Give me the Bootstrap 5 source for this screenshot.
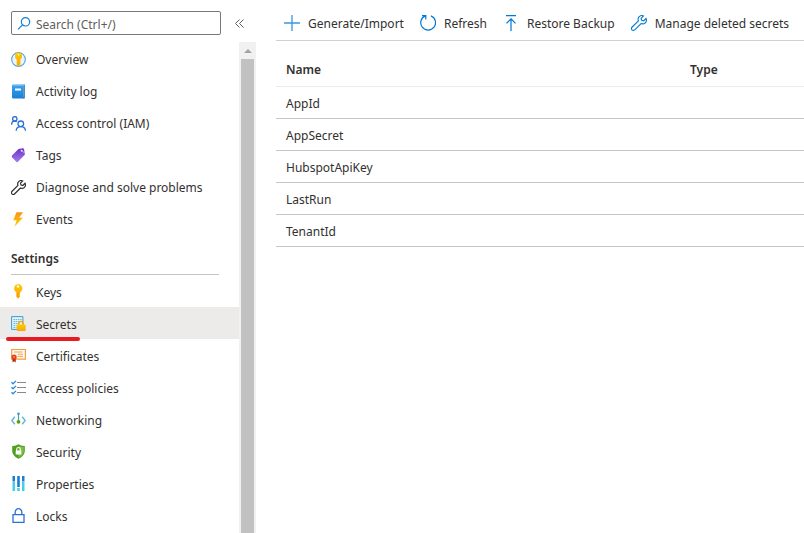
<!DOCTYPE html>
<html lang="en">
<head>
<meta charset="utf-8">
<meta name="viewport" content="width=device-width, initial-scale=1">
<title>Key vault - Secrets</title>
<link href="https://cdn.jsdelivr.net/npm/bootstrap@5.3.0/dist/css/bootstrap.min.css" rel="stylesheet">
<style>
  body { font-family: "Noto Sans", "Open Sans", sans-serif; font-size: 12px; line-height: 20px; color: #323130; background: #fff; }
  svg { display: block; flex: none; }
  .blade-menu { width: 256px; }
  .menu-top { height: 42px; padding: 11px 11px 7px; gap: 13px; }
  .search-box { width: 210px; height: 24px; border: 1px solid #7a7876; border-radius: 2px; padding: 0 5px; gap: 4px; }
  .search-box input { height: 22px; padding: 2px 0 0; font-size: 12px; line-height: 20px; outline: 0; color: #323130; }
  .search-box input::placeholder { color: #605e5c; opacity: 1; }
  .menu-links { padding-top: 1px; }
  .menu-item { height: 32px; padding: 2px 11px 0; gap: 10px; color: #323130; text-decoration: none; position: relative; }
  .menu-item svg { margin-bottom: 2px; }
  .menu-group .menu-item { padding-top: 3px; }
  .menu-item:hover { background: #f3f2f1; color: #323130; }
  .menu-item.current { background: #edebe9; }
  .menu-item.current::after { content: ""; position: absolute; left: 6px; bottom: -2px; width: 74px; height: 4px; border-radius: 2px; background: #e81b23; }
  .menu-heading { height: 40px; margin: 0 20px 0 11px; padding-top: 14px; font-size: 12px; line-height: 20px; font-weight: 600; border-bottom: 1px solid #c8c6c4; }
  .scroll-track { width: 17px; background: #f1f1f1; }
  .scroll-track button { height: 17px; }
  .scroll-thumb { width: 13px; background: #c1c1c1; }
  .blade-main { margin-left: 20px; }
  .command-bar { height: 41px; padding: 5px 8px 0; gap: 16px; border-bottom: 1px solid #d2d0ce; }
  .command-bar button { gap: 8px; color: #323130; padding: 2px 0 0; }
  .command-bar svg { margin-bottom: 2px; }
  .secret-table { font-size: 12px; line-height: 20px; color: #323130; table-layout: fixed; }
  .secret-table th, .secret-table td { height: 32px; padding: 7px 10px 4px; border-bottom: 1px solid #c8c6c4; color: #323130; }
  .secret-table thead th { height: 45px; padding: 18px 10px 6px; font-weight: 600; border-color: #edebe9; }
  .secret-table .type-col { width: 124px; }
</style>
<script src="https://cdn.jsdelivr.net/npm/bootstrap@5.3.0/dist/js/bootstrap.bundle.min.js"></script>
</head>
<body>
<svg width="0" height="0" class="position-absolute" aria-hidden="true">
  <defs>
    <linearGradient id="gold" x1="0" y1="0" x2="0" y2="1"><stop offset="0" stop-color="#ffca00"/><stop offset="1" stop-color="#fba50a"/></linearGradient>
    <linearGradient id="blue" x1="0" y1="0" x2="0" y2="1"><stop offset="0" stop-color="#3aa5ee"/><stop offset="1" stop-color="#1b7fd4"/></linearGradient>
    <linearGradient id="violet" x1="0" y1="0" x2="0" y2="1"><stop offset="0" stop-color="#6a2fc4"/><stop offset="1" stop-color="#a67cf0"/></linearGradient>
    <linearGradient id="bolt" x1="0" y1="0" x2="0" y2="1"><stop offset="0" stop-color="#f9921e"/><stop offset="1" stop-color="#ffd400"/></linearGradient>
    <path id="wrench" d="M15 3.500 12.600 5.900 10.700 5.300 10.100 3.400 12.500 1C11.100.3 9.400.5 8.200 1.700 7.100 2.800 6.900 4.400 7.400 5.800L1.200 12C.3 12.900.3 14 1 14.800 1.800 15.600 3.100 15.600 4 14.700L10.100 8.600C11.500 9.100 13.200 8.900 14.300 7.800 15.500 6.600 15.700 4.900 15 3.500Z"/>
  </defs>
</svg>
<div class="d-flex vh-100 overflow-hidden">
  <aside class="blade-menu d-flex flex-column flex-shrink-0">
    <div class="menu-top d-flex align-items-center">
      <div class="search-box d-flex align-items-center flex-shrink-0">
        <svg width="15" height="15" viewBox="0 0 15 15" fill="none" stroke="#1b7fd0" stroke-width="1.2"><circle cx="8.500" cy="5.800" r="4.200"/><path d="M5.500 8.900 1 13.400"/></svg>
        <input id="menu-search" class="border-0 w-100 bg-transparent" type="text" placeholder="Search (Ctrl+/)" aria-label="Search (Ctrl+/)">
      </div>
      <button class="border-0 bg-transparent p-0" type="button" aria-label="Collapse menu">
        <svg width="11" height="11" viewBox="0 0 11 11" fill="none" stroke="#605e5c"><path d="M5.500 1.500 1.500 5.500l4 4M9.500 1.500 5.500 5.500l4 4"/></svg>
      </button>
    </div>
    <div class="d-flex flex-grow-1 overflow-hidden">
      <nav class="menu-links flex-grow-1" aria-label="Key vault menu">
        <a class="menu-item d-flex align-items-center" href="#"><svg width="15" height="15" viewBox="0 0 15 15"><circle cx="7.500" cy="7.500" r="6.800" fill="#eaf6fc" stroke="#5ea7d8" stroke-width="1.200"/><path d="M7.500.500a3.800 3.800 0 0 1 1.900 7v4.900L7.500 14.500 5.700 12.700V7.500A3.800 3.800 0 0 1 7.500.500Z" fill="url(#gold)"/><circle cx="7.500" cy="2.600" r=".9" fill="#fff2c0"/></svg>Overview</a>
        <a class="menu-item d-flex align-items-center" href="#"><svg width="15" height="15" viewBox="0 0 15 15"><path d="M1 1.800Q1 .5 2.300.5H12.500V13H13V14.500H2.300Q1 14.500 1 13.200Z" fill="url(#blue)"/><path d="M12.500.500h1.300v14h-1.300z" fill="#1d70b7"/><path d="M2 1.300h10.500" stroke="#8cc9ef" stroke-width=".8"/><path d="M4 4.500h6v2H4z" fill="#fff"/></svg>Activity log</a>
        <a class="menu-item d-flex align-items-center" href="#"><svg width="15" height="15" viewBox="0 0 15 15" fill="none" stroke="#2a6fd6" stroke-width="1.300"><circle cx="3.800" cy="2.800" r="2.200"/><path d="M.6 8.800C.6 6.500 1.800 5.100 3.800 5.100q1.200 0 2 .7"/><circle cx="9.800" cy="7.800" r="2.800"/><path d="M5.200 14.800c0-2.500 1.800-4.200 4.600-4.200s4.600 1.700 4.600 4.200"/></svg>Access control (IAM)</a>
        <a class="menu-item d-flex align-items-center" href="#"><svg width="15" height="15" viewBox="0 0 15 15"><path d="M1 7.500 7.500.900 11.800.300Q12.800.300 13 1.300L14 6.500 7 13.800Q6.300 14.500 5.500 13.900L1 9.200Q.400 8.300 1 7.500Z" fill="url(#violet)"/><path d="M10.700 2 13.700 5.500" stroke="#c9a9f7" stroke-width="1"/><circle cx="10.600" cy="2.700" r="1" fill="#e7d8ff"/></svg>Tags</a>
        <a class="menu-item d-flex align-items-center" href="#"><svg width="15" height="15" viewBox="0 0 16 16" fill="none" stroke="#323130" stroke-width="1.300"><use href="#wrench"/></svg>Diagnose and solve problems</a>
        <a class="menu-item d-flex align-items-center" href="#"><svg width="15" height="15" viewBox="0 0 15 15"><path d="M5.500.300H12L8.200 5.800H11.800L3.500 14.700 5.600 8.300H2.200Z" fill="url(#bolt)"/></svg>Events</a>
        <h2 class="menu-heading mb-0">Settings</h2>
        <div class="menu-group">
        <a class="menu-item d-flex align-items-center" href="#"><svg width="15" height="15" viewBox="0 0 15 15"><path d="M7 0A4.500 4.500 0 0 1 9.200 8.300V9.200L8.500 9.900 9.200 10.700 8.500 11.500 9.200 12.300 7.200 14.800 5.300 12.800V8.300A4.500 4.500 0 0 1 7 0Z" fill="url(#gold)"/><circle cx="7" cy="2.500" r="1.200" fill="#fff"/><path d="M6.700 8.500v4.500" stroke="#f08c00" stroke-width=".6"/></svg>Keys</a>
        <a class="menu-item current d-flex align-items-center" href="#" aria-current="page"><svg width="15" height="15" viewBox="0 0 15 15"><path d="M.6.600h11.300v12.800H.6z" fill="#dff2fa" stroke="#3d9cc9"/><path d="M2.500 3.500h8M2.500 5.500h8M2.500 7.500h6M2.500 9.500h3M2.500 11.500h3" stroke="#6cb8dc" stroke-dasharray="1.500 .7"/><path d="M7.700 9V7.500a2.200 2.200 0 0 1 4.400 0V9" fill="none" stroke="#f5a800" stroke-width="1.300"/><rect x="5.700" y="8.500" width="9" height="6.500" rx=".8" fill="url(#gold)"/></svg>Secrets</a>
        <a class="menu-item d-flex align-items-center" href="#"><svg width="15" height="15" viewBox="0 0 15 15"><path d="M.700 1.500h13.700v9.700H.700z" fill="#fff8ec" stroke="#f2a03d" stroke-width="1.200"/><path d="M3 4h8.500M6.500 6.200h5.500M6.500 8.400h5.500" stroke="#f0a456"/><path d="M1.500 10.500h3.200v4L3.100 13.200 1.500 14.500Z" fill="#b5220e"/><circle cx="3.100" cy="9" r="2.600" fill="#e2431e"/><circle cx="3.100" cy="9" r="1" fill="#f98b45"/></svg>Certificates</a>
        <a class="menu-item d-flex align-items-center" href="#"><svg width="15" height="15" viewBox="0 0 15 15" fill="none"><path d="M6 2.500h9M6 7.500h9M6 12.500h9" stroke="#8a8886" stroke-width="1.200"/><path d="m.5 2.300 1.500 1.500L5 .900M.5 7.300l1.500 1.500L5 5.900M.5 12.300l1.500 1.500L5 10.900" stroke="#2b88d8" stroke-width="1.300"/></svg>Access policies</a>
        <a class="menu-item d-flex align-items-center" href="#"><svg width="15" height="15" viewBox="0 0 15 15" fill="none"><path d="M3.800 4.700.800 8.500l3 3.800M11.200 4.700l3 3.800-3 3.800" stroke="#5fb3d9" stroke-width="1.400"/><path d="M7.500 2v8" stroke="#4a9fb8" stroke-width="1.200"/><circle cx="7.500" cy="1.800" r="1.300" fill="#3999c6"/><circle cx="7.500" cy="9.800" r="1.900" fill="#57a300"/></svg>Networking</a>
        <a class="menu-item d-flex align-items-center" href="#"><svg width="15" height="15" viewBox="0 0 15 15"><path d="M7.500.300Q10 2.200 13.800 2V7Q13.800 11.800 7.500 14.800 1.200 11.800 1.200 7V2Q5 2.200 7.500.300Z" fill="#4f9e1f"/><path d="M7.500 1.500Q9.800 3 12.800 3V7Q12.800 11 7.500 13.600Z" fill="#7cc043"/><path d="M5.700 7V5.300a1.800 1.800 0 0 1 3.600 0V7" fill="none" stroke="#fff" stroke-width="1.100"/><rect x="4.700" y="6.500" width="5.600" height="4" rx=".5" fill="#fff"/></svg>Security</a>
        <a class="menu-item d-flex align-items-center" href="#"><svg width="15" height="15" viewBox="0 0 15 15"><path d="M1.500 0h2.500v5.500H1.500zM6.200 0h2.600v11H6.200zM11 0h2.500v5.500H11z" fill="#1b7cd3"/><path d="M1.500 6h2.500v9H1.500zM6.200 12h2.600v3H6.200zM11 6h2.500v9H11z" fill="#45cdf0"/></svg>Properties</a>
        <a class="menu-item d-flex align-items-center" href="#"><svg width="15" height="15" viewBox="0 0 15 15" fill="none" stroke="#2a6fd6" stroke-width="1.300"><path d="M2 6.700h11v7.700H2zM4.200 6.700V4a3.300 3.300 0 0 1 6.600 0v2.700"/></svg>Locks</a>
        </div>
      </nav>
      <div class="scroll-track d-flex flex-column align-items-center flex-shrink-0">
        <button class="border-0 bg-transparent p-0 w-100 d-flex align-items-center justify-content-center flex-shrink-0" type="button" aria-label="Scroll up"><svg width="8" height="4" viewBox="0 0 8 4"><path d="M0 4 4 0l4 4z" fill="#a3a3a3"/></svg></button>
        <div class="scroll-thumb flex-grow-1"></div>
      </div>
    </div>
  </aside>
  <main class="blade-main flex-grow-1 overflow-hidden">
    <div class="command-bar d-flex align-items-center text-nowrap" role="toolbar" aria-label="Secret commands">
      <button class="d-flex align-items-center border-0 bg-transparent" type="button"><svg width="16" height="16" viewBox="0 0 16 16" fill="none" stroke="#3a96dd" stroke-width="1.300"><path d="M8 0v16M0 8h16"/></svg>Generate/Import</button>
      <button class="d-flex align-items-center border-0 bg-transparent" type="button"><svg width="16" height="16" viewBox="0 0 16 16" fill="none" stroke="#0078d4" stroke-width="1.200"><path d="M11 .900A7.400 7.400 0 1 1 5.300.900M2 .600h3.800v3.800"/></svg>Refresh</button>
      <button class="d-flex align-items-center border-0 bg-transparent" type="button"><svg width="16" height="16" viewBox="0 0 16 16" fill="none" stroke="#0078d4" stroke-width="1.200"><path d="M3 .600h10M8 16V4M3.500 8.300 8 3.800l4.500 4.500"/></svg>Restore Backup</button>
      <button class="d-flex align-items-center border-0 bg-transparent" type="button"><svg width="16" height="16" viewBox="0 0 16 16" fill="none" stroke="#0078d4" stroke-width="1.100"><use href="#wrench"/></svg>Manage deleted secrets</button>
    </div>
    <table class="secret-table table mb-0">
      <thead><tr><th scope="col">Name</th><th scope="col" class="type-col">Type</th></tr></thead>
      <tbody>
        <tr><td>AppId</td><td></td></tr>
        <tr><td>AppSecret</td><td></td></tr>
        <tr><td>HubspotApiKey</td><td></td></tr>
        <tr><td>LastRun</td><td></td></tr>
        <tr><td>TenantId</td><td></td></tr>
      </tbody>
    </table>
  </main>
</div>
</body>
</html>
